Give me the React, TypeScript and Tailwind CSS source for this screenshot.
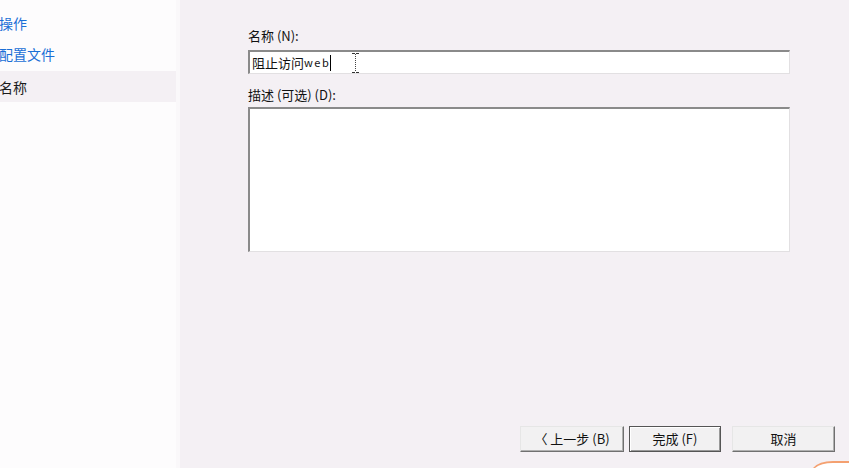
import React from "react";

const FONT = { fontFamily: '"Noto Sans CJK SC", "Liberation Sans", sans-serif' };

function NavItem({ label, active }: { label: string; active?: boolean }) {
  return (
    <div
      className={`h-[31px] flex items-center text-[14px] leading-none ${
        active ? "bg-[#f4f0f4] text-[#1b1b1b]" : "text-[#1a6fd6]"
      }`}
    >
      <span className="-ml-[1px]">{label}</span>
    </div>
  );
}

function WinButton({ children, w, primary }: { children: React.ReactNode; w: string; primary?: boolean }) {
  return (
    <button
      className={`${w} h-[26px] bg-[#f2f1f2] text-[13px] text-[#111] flex items-center justify-center border ${
        primary
          ? "border-[#555] shadow-[inset_1px_1px_0_#fff,inset_-1px_-1px_0_#999]"
          : "border-t-[#e6e6e6] border-l-[#e6e6e6] border-r-[#707070] border-b-[#707070] shadow-[inset_-1px_-1px_0_#b0b0b0]"
      }`}
    >
      {children}
    </button>
  );
}

export default function App() {
  return (
    <div className="w-[849px] h-[468px] flex overflow-hidden bg-[#f4f0f4] relative" style={FONT}>
      {/* left nav */}
      <div className="w-[176px] bg-[#fdfcfd] pt-[7px] flex flex-col">
        <NavItem label="操作" />
        <NavItem label="配置文件" />
        <div className="h-[2px]" />
        <NavItem label="名称" active />
      </div>
      <div className="w-[4px] bg-[#faf8fa]" />

      {/* main */}
      <div className="flex-1 flex flex-col pl-[68px] pr-[14px]">
        <div className="w-[542px] pt-[28px]">
          <div className="text-[13px] text-[#111] leading-[16px] h-[22px]">名称 (N):</div>
          <div className="relative h-[24px] bg-white border-t-2 border-l-2 border-t-[#8a8a8a] border-l-[#8a8a8a] border-r border-b border-r-[#e2e0e2] border-b-[#e2e0e2] flex items-center pl-[2px] text-[13px] text-[#111]">
            <span>阻止访问</span>
            <span className="text-[11px] tracking-[1.5px]">web</span>
            <span className="w-px h-[16px] bg-black" />
            <svg className="absolute left-[102px] top-[1px]" width="7" height="20" viewBox="0 0 7 20">
              <path d="M0 0.5H3M4 0.5H7M0 19.5H3M4 19.5H7" stroke="#333" strokeWidth="1" />
              <path d="M3.5 1V19" stroke="#444" strokeWidth="1" strokeDasharray="1 1" />
            </svg>
          </div>
          <div className="text-[13px] text-[#111] leading-[16px] mt-[13px] h-[20px]">描述 (可选) (D):</div>
          <div className="h-[145px] bg-white border-t-2 border-l-2 border-t-[#8a8a8a] border-l-[#8a8a8a] border-r border-b border-r-[#e2e0e2] border-b-[#e2e0e2]" />
        </div>

        <div className="flex-1" />
        <div className="flex justify-end pb-[16px]">
          <WinButton w="w-[104px]">〈 上一步 (B)</WinButton>
          <div className="ml-[5px]">
            <WinButton w="w-[92px]" primary>完成 (F)</WinButton>
          </div>
          <div className="ml-[11px]">
            <WinButton w="w-[103px]">取消</WinButton>
          </div>
        </div>
      </div>

      {/* orange overlay corner */}
      <svg className="absolute right-0 bottom-0" width="36" height="8" viewBox="0 0 36 8">
        <path d="M0 8 Q6 1 20 1 L36 1 L36 8 Z" fill="#f4a070" />
        <path d="M2 8 Q8 3 20 3 L36 3 L36 8 Z" fill="#ffffff" />
      </svg>
    </div>
  );
}
